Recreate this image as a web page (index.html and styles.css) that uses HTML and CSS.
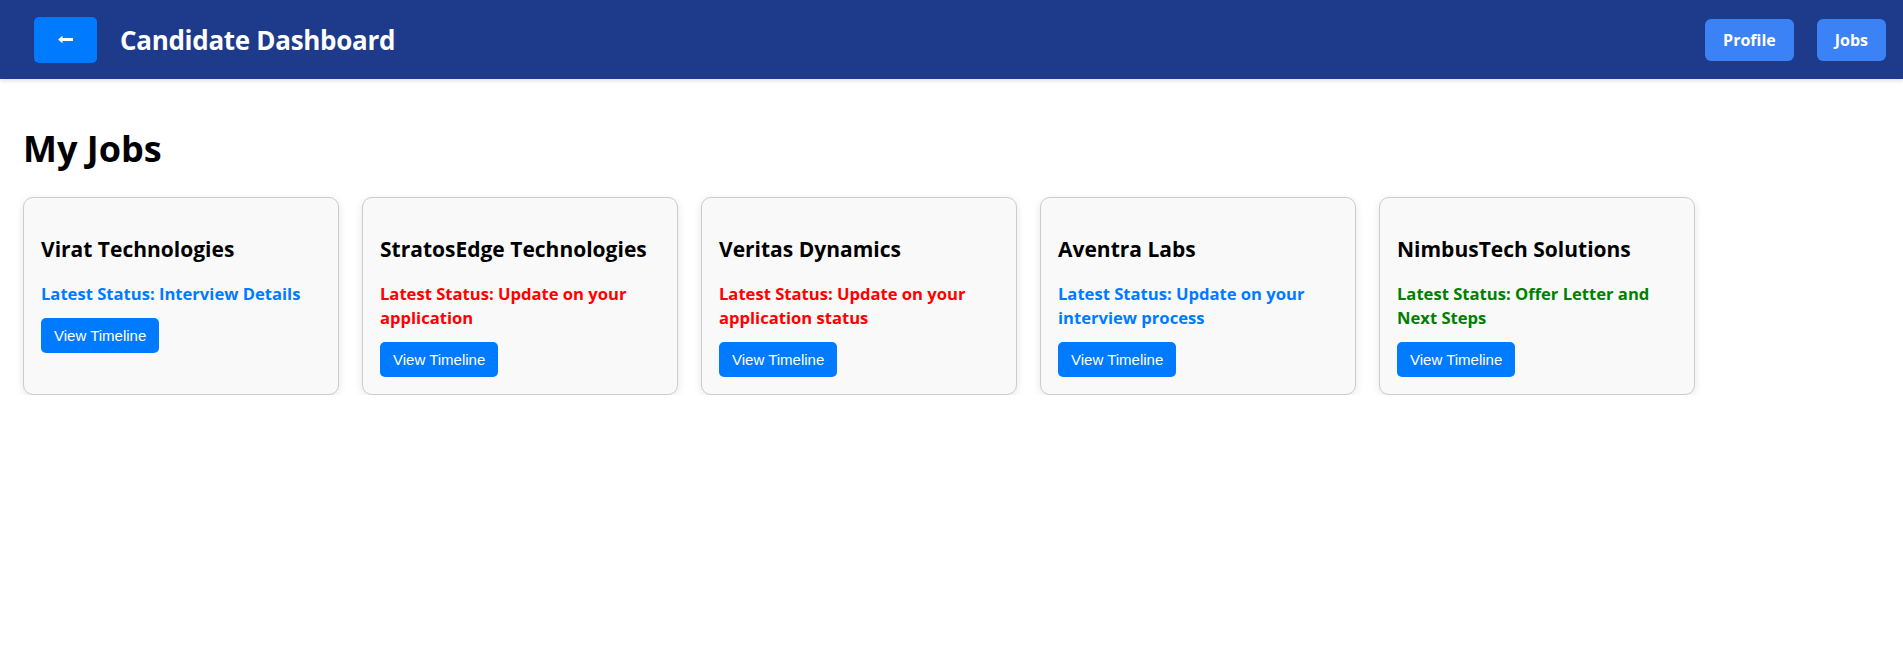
FILE: index.html
```html
<!DOCTYPE html>
<html lang="en">
<head>
<meta charset="utf-8">
<title>Candidate Dashboard</title>
<link rel="stylesheet" href="styles.css">
</head>
<body>
<header class="topbar">
  <div class="topbar-left">
    <button class="back-btn" type="button" aria-label="Back">
      <svg class="back-icon" width="15" height="9" viewBox="0 0 15 9" aria-hidden="true">
        <path d="M0 4.5 L4.5 0.8 V3 H15 V6 H4.5 V8.2 Z" fill="#ffffff"/>
      </svg>
    </button>
    <h1 class="app-title">Candidate Dashboard</h1>
  </div>
  <nav class="topbar-right">
    <button class="nav-btn" type="button">Profile</button>
    <button class="nav-btn" type="button">Jobs</button>
  </nav>
</header>
<main class="content">
  <h2 class="page-title">My Jobs</h2>
  <div class="cards">
    <div class="card">
      <h3 class="card-title">Virat Technologies</h3>
      <p class="status status-blue">Latest Status: Interview Details</p>
      <button class="timeline-btn" type="button">View Timeline</button>
    </div>
    <div class="card">
      <h3 class="card-title">StratosEdge Technologies</h3>
      <p class="status status-red">Latest Status: Update on your application</p>
      <button class="timeline-btn" type="button">View Timeline</button>
    </div>
    <div class="card">
      <h3 class="card-title">Veritas Dynamics</h3>
      <p class="status status-red">Latest Status: Update on your application status</p>
      <button class="timeline-btn" type="button">View Timeline</button>
    </div>
    <div class="card">
      <h3 class="card-title">Aventra Labs</h3>
      <p class="status status-blue">Latest Status: Update on your interview process</p>
      <button class="timeline-btn" type="button">View Timeline</button>
    </div>
    <div class="card">
      <h3 class="card-title">NimbusTech Solutions</h3>
      <p class="status status-green">Latest Status: Offer Letter and Next Steps</p>
      <button class="timeline-btn" type="button">View Timeline</button>
    </div>
  </div>
</main>
</body>
</html>
```
FILE: styles.css
```css
* { box-sizing: border-box; }
body {
  margin: 0;
  background: #ffffff;
  font-family: "Open Sans", "Noto Sans", sans-serif;
  color: #000;
}
.topbar {
  height: 79px;
  background: #1e3a8a;
  display: flex;
  align-items: center;
  justify-content: space-between;
  padding: 0 17px 0 34px;
  box-shadow: 0 2px 4px rgba(0,0,0,0.12);
}
.topbar-left {
  display: flex;
  align-items: center;
  gap: 23px;
}
.back-btn {
  width: 63px;
  height: 46px;
  border: none;
  border-radius: 5px;
  background: #007bff;
  padding: 0;
  display: flex;
  align-items: center;
  justify-content: center;
}
.back-icon {
  display: block;
}
.app-title {
  margin: 0;
  color: #fff;
  font-size: 26px;
  font-weight: 700;
  letter-spacing: -0.3px;
}
.topbar-right {
  display: flex;
  gap: 23px;
}
.nav-btn {
  height: 42px;
  padding: 0 18px;
  border: none;
  border-radius: 6px;
  background: #3b82f6;
  color: #fff;
  font-family: "Open Sans", "Noto Sans", sans-serif;
  font-size: 16px;
  font-weight: 700;
}
.content {
  padding: 0 23px;
}
.page-title {
  margin: 0;
  padding-top: 48px;
  font-size: 36px;
  line-height: 44px;
  font-weight: 700;
}
.cards {
  display: flex;
  gap: 23px;
  margin-top: 26px;
}
.card {
  flex: 0 0 316px;
  background: #f9f9f9;
  border: 1px solid #cccccc;
  border-radius: 10px;
  padding: 18px 17px 17px 17px;
  box-shadow: 0 2px 8px rgba(0,0,0,0.1);
}
.card-title {
  margin: 19px 0 0;
  font-size: 21px;
  line-height: 29px;
  font-weight: 700;
}
.status {
  margin: 18px 0 12px;
  font-size: 16.6px;
  line-height: 24px;
  font-weight: 700;
}
.status-blue { color: #007bff; }
.status-red { color: #ff0000; }
.status-green { color: #008000; }
.timeline-btn {
  height: 35px;
  padding: 0 13px;
  border: none;
  border-radius: 5px;
  background: #007bff;
  color: #fff;
  font-family: "Liberation Sans", Arial, sans-serif;
  font-size: 15px;
}
```
